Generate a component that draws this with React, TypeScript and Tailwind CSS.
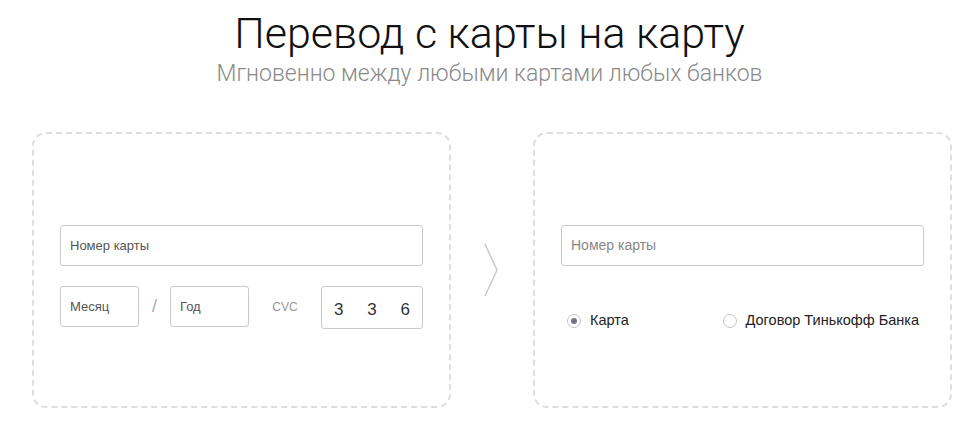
import { ReactNode } from "react";

function Field({ children, className = "" }: { children: ReactNode; className?: string }) {
  return (
    <div
      className={
        "flex items-center rounded-[3px] border border-[#c9c9c9] bg-white px-[9px] " + className
      }
    >
      {children}
    </div>
  );
}

function Radio({ checked, label }: { checked?: boolean; label: string }) {
  return (
    <div className="flex items-center gap-[9px]">
      <span className="flex h-[14px] w-[14px] items-center justify-center rounded-full border border-[#c4c4c4] bg-white">
        {checked && <span className="h-[6px] w-[6px] rounded-full bg-[#707680]" />}
      </span>
      <span className="text-[14.5px] text-[#222]">{label}</span>
    </div>
  );
}

export default function App() {
  return (
    <div className="h-[428px] w-[979px] bg-white font-['Liberation_Sans',Arial,sans-serif]">
      <div className="flex flex-col items-center pt-[7px]">
        <h1 className="font-['Roboto',sans-serif] text-[43px] font-light leading-[52px] text-[#111]">
          Перевод с карты на карту
        </h1>
        <p className="font-['Roboto',sans-serif] text-[23px] font-light leading-[30px] text-[#8a8a8a]">
          Мгновенно между любыми картами любых банков
        </p>
      </div>

      <div className="mt-[43px] flex pl-[32px]">
        <div className="flex h-[276px] w-[419px] flex-col rounded-[14px] border-2 border-dashed border-[#dedede] px-[26px] pt-[91px]">
          <Field className="h-[41px]">
            <span className="text-[13px] text-[#555]">Номер карты</span>
          </Field>
          <div className="mt-[20px] flex items-start">
            <Field className="h-[41px] w-[79px]">
              <span className="text-[13px] text-[#555]">Месяц</span>
            </Field>
            <span className="flex h-[41px] w-[31px] items-center justify-center text-[18px] font-light text-[#aaa]">
              /
            </span>
            <Field className="h-[41px] w-[79px]">
              <span className="text-[13px] text-[#555]">Год</span>
            </Field>
            <span className="flex h-[41px] w-[72px] items-center justify-center text-[12px] text-[#999]">
              CVC
            </span>
            <Field className="h-[43px] flex-1 justify-between px-[12px] pt-[4px]">
              <span className="text-[17px] text-[#333]">3</span>
              <span className="text-[17px] text-[#333]">3</span>
              <span className="text-[17px] text-[#333]">6</span>
            </Field>
          </div>
        </div>

        <div className="flex w-[82px] items-center justify-center">
          <svg width="18" height="56" viewBox="0 0 18 56" fill="none">
            <path d="M2 2 L14 28 L2 54" stroke="#c8c8c8" strokeWidth="1.5" />
          </svg>
        </div>

        <div className="flex h-[276px] w-[419px] flex-col rounded-[14px] border-2 border-dashed border-[#dedede] px-[26px] pt-[91px]">
          <Field className="h-[41px]">
            <span className="text-[14px] text-[#888]">Номер карты</span>
          </Field>
          <div className="mt-[44px] flex items-center justify-between pl-[6px] pr-[5px]">
            <Radio checked label="Карта" />
            <Radio label="Договор Тинькофф Банка" />
          </div>
        </div>
      </div>
    </div>
  );
}
